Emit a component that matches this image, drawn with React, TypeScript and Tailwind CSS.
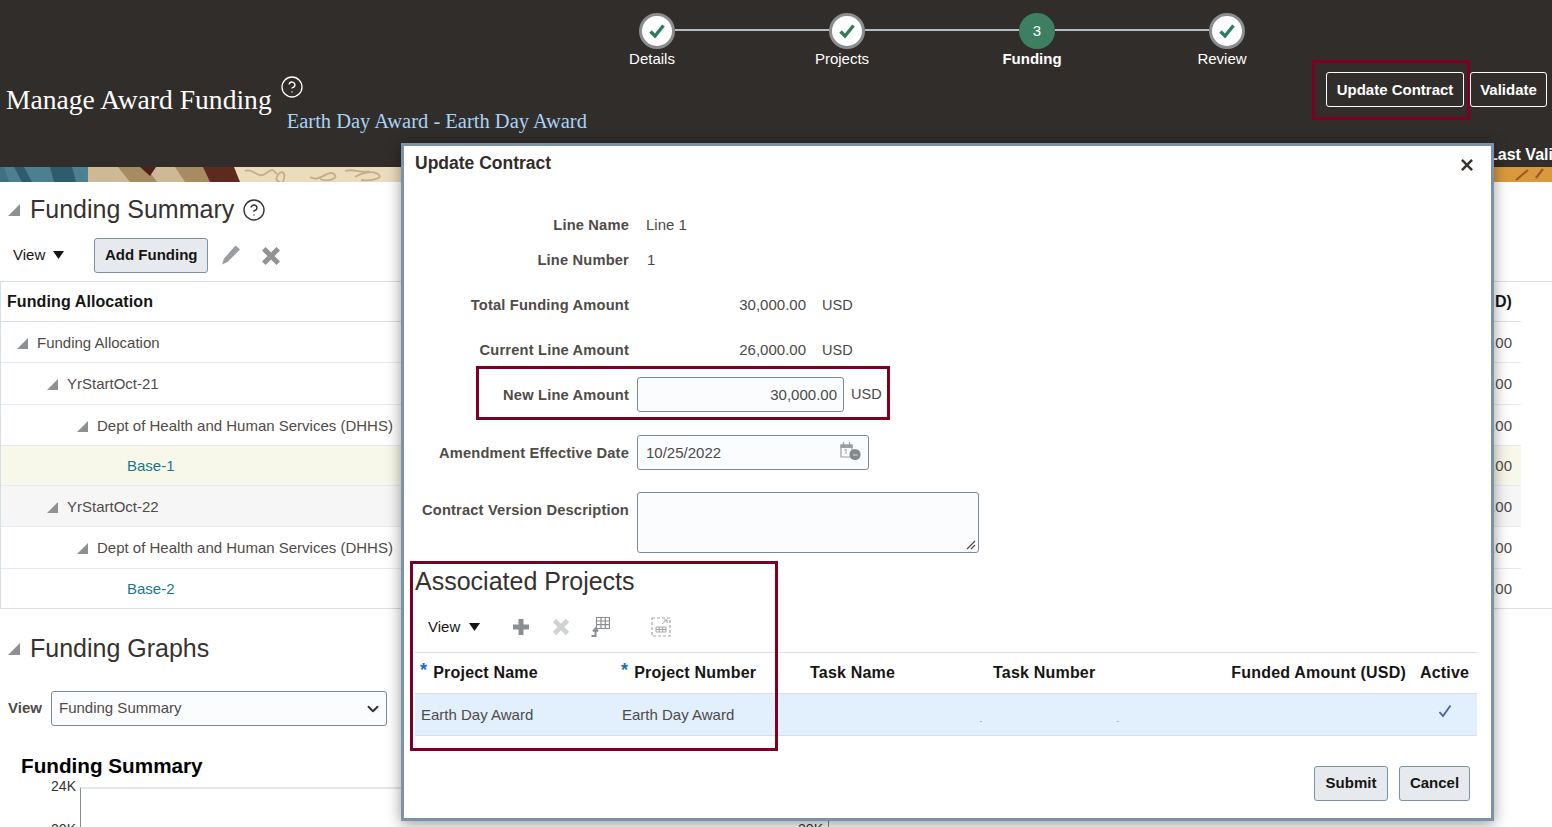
import React from 'react';
import { ChevronDown, CircleHelp } from 'lucide-react';

const steps = [
  { label: 'Details', done: true },
  { label: 'Projects', done: true },
  { label: 'Funding', done: false },
  { label: 'Review', done: true },
];

const rows = [
  { label: 'Funding Allocation', indent: 'pl-[16px]', cls: 'h-[41px]' },
  { label: 'YrStartOct-21', indent: 'pl-[46px]', cls: 'h-[42px]' },
  { label: 'Dept of Health and Human Services (DHHS)', indent: 'pl-[76px]', cls: 'h-[41px]' },
  { label: 'Base-1', indent: 'pl-[126px]', cls: 'h-[40px] bg-[#f7f8e9]', link: true },
  { label: 'YrStartOct-22', indent: 'pl-[46px]', cls: 'h-[41px] bg-[#f6f6f6]' },
  { label: 'Dept of Health and Human Services (DHHS)', indent: 'pl-[76px]', cls: 'h-[42px]' },
  { label: 'Base-2', indent: 'pl-[126px]', cls: 'h-[39px] border-b-0', link: true },
];

function Disclosure({ size = 11 }: { size?: number }) {
  return (
    <svg width={size} height={size} viewBox="0 0 11 11" className="shrink-0">
      <polygon points="11,0 11,11 0,11" fill="#8e9194" />
    </svg>
  );
}

function DownArrow() {
  return (
    <svg width="11" height="8" viewBox="0 0 11 8">
      <polygon points="0,0 11,0 5.5,8" fill="#161513" />
    </svg>
  );
}

function Cross({ size = 18, color = '#8f9396', width = 4.5 }: { size?: number; color?: string; width?: number }) {
  return (
    <svg width={size} height={size} viewBox="0 0 18 18">
      <path d="M2.5 2.5 15.5 15.5M15.5 2.5 2.5 15.5" stroke={color} strokeWidth={width} />
    </svg>
  );
}

function Check() {
  return (
    <svg width="18" height="16" viewBox="0 0 18 16">
      <path d="M2.5 8.5 7 13 15.5 2.5" fill="none" stroke="#2f7d5c" strokeWidth="3.4" />
    </svg>
  );
}

function Step({ done }: { done: boolean }) {
  if (!done) {
    return (
      <div className="w-[36px] h-[36px] rounded-full bg-[#3c8061] flex items-center justify-center text-[15px] text-white shrink-0">
        3
      </div>
    );
  }
  return (
    <div className="w-[36px] h-[36px] rounded-full bg-white border-[3px] border-[#8a8d8f] flex items-center justify-center shrink-0">
      <Check />
    </div>
  );
}

function Banner() {
  return (
    <svg width="1552" height="15" viewBox="0 0 1552 15" className="block">
      <rect width="1552" height="15" fill="#eadcbd" />
      <rect width="90" height="15" fill="#4c7f8f" />
      <polygon points="0,0 4,0 9,15 0,15" fill="#3e7081" />
      <polygon points="14,0 24,0 32,15 22,15" fill="#2f5c6c" />
      <polygon points="50,0 72,0 76,15 54,15" fill="#2f5c6c" />
      <polygon points="78,0 88,0 98,15 88,15" fill="#4c8294" />
      <rect x="88" width="120" height="15" fill="#cdb995" />
      <polygon points="118,0 146,0 157,15 130,15" fill="#a68c60" />
      <polygon points="140,0 156,0 150,9" fill="#4f2018" />
      <polygon points="175,0 205,0 212,15 185,15" fill="#a68c60" />
      <polygon points="203,0 234,0 240,15 210,15" fill="#5e2a1f" />
      <path
        d="M245 4c8-4 12 8 20 3s6-6 12 0M276 12c4-10 10-8 8 0s-6 2-8 0M310 10c10 6 18-8 24-3s-8 8-14 5M345 4c10-3 16 3 24 0M355 10c10-6 20-6 24-2s-10 6-18 5"
        fill="none"
        stroke="#c4ae89"
        strokeWidth="1.8"
      />
      <rect x="1494" width="58" height="15" fill="#d99a3e" />
      <path d="M1516 13 1528 3M1536 11 1543 2" stroke="#9a5a2a" strokeWidth="2.2" />
    </svg>
  );
}

function Pencil() {
  return (
    <svg width="22" height="22" viewBox="0 0 22 22">
      <path d="M15.5 1.5 20 5.5 7.5 18 2 20.5 4 14.5Z" fill="#9a9ea1" />
    </svg>
  );
}

function ExportIcon() {
  return (
    <svg width="20" height="22" viewBox="0 0 20 22">
      <path d="M6.5 1.5h13v11h-13zM6.5 5h13M6.5 8.7h13M11 1.5V12.5M15.3 1.5V12.5" fill="none" stroke="#8b8f92" strokeWidth="1.2" />
      <path d="M1.5 20h4v-6M3 15.5 5.5 12.5 8 15.5" fill="none" stroke="#8b8f92" strokeWidth="2" />
    </svg>
  );
}

function DetachIcon() {
  return (
    <svg width="20" height="20" viewBox="0 0 20 20">
      <rect x="1" y="1" width="18" height="18" fill="none" stroke="#a3a6a9" strokeWidth="1.2" strokeDasharray="3 2" />
      <path d="M5 10h10v5H5zM5 12.5h10M8.3 10v5M11.7 10v5" fill="none" stroke="#a3a6a9" strokeWidth="1" />
      <path d="M11 7 15.5 3M13 3h3v3" fill="none" stroke="#a3a6a9" strokeWidth="1" />
    </svg>
  );
}

function CalendarClock() {
  return (
    <svg width="22" height="20" viewBox="0 0 22 20">
      <path d="M1 4h11v12H1z" fill="none" stroke="#9a9ea1" strokeWidth="1.2" />
      <path d="M1 4h11v2.4H1zM3.5 1v3M9.5 1v3" fill="#9a9ea1" stroke="#9a9ea1" strokeWidth="1.2" />
      <path d="M4.5 9 6 8v5" fill="none" stroke="#9a9ea1" strokeWidth="1" />
      <circle cx="15" cy="13.5" r="5.6" fill="#85898c" />
      <path d="M13 14h4.5" stroke="#d4d6d8" strokeWidth="1.1" />
    </svg>
  );
}

function FormRow({ label, height, margin, children, top, nudge }: { label: string; height: string; margin: string; children: React.ReactNode; top?: boolean; nudge?: boolean }) {
  return (
    <div className={`flex ${height} ${margin} ${top ? 'items-start' : 'items-center'}`}>
      <label className={`w-[225px] text-right font-bold text-[14.67px] tracking-[0.18px] text-[#4f4b47] shrink-0 ${top ? 'pt-[7px]' : ''} ${nudge ? 'pt-[1px]' : ''}`}>{label}</label>
      <div className="ml-[8px] flex items-center text-[15px] text-[#4a4a4a]">{children}</div>
    </div>
  );
}

function Star() {
  return <span className="text-[#1a6fb5] text-[18px] font-bold leading-none mr-[6px] -mt-[6px]">*</span>;
}

export default function App() {
  return (
    <div className="relative w-[1552px] h-[827px] overflow-hidden bg-white [font-family:'Liberation_Sans',sans-serif] text-[#161513]">
      <header className="h-[167px] bg-[#312d2a] flex text-white">
        <div className="w-[557px] shrink-0 flex">
          <h1 className="pl-[6px] pt-[84px] text-[27.6px] leading-[32px] [font-family:'Liberation_Serif',serif] whitespace-nowrap">
            Manage Award Funding
          </h1>
          <div className="ml-[8px] pt-[75px]">
            <CircleHelp size={24} strokeWidth={1.3} />
            <div className="pl-[7px] mt-[10px] text-[20.5px] leading-[24px] text-[#a9d3f5] [font-family:'Liberation_Serif',serif] whitespace-nowrap">
              Earth Day Award - Earth Day Award
            </div>
          </div>
        </div>
        <div className="w-[760px] shrink-0 pt-[13px]">
          <div className="ml-[82px] flex items-center">
            {steps.map((s, i) => (
              <React.Fragment key={s.label}>
                <Step done={s.done} />
                {i < 3 && <div className="w-[154px] h-[2px] -mt-[2px] bg-[#b5bcc4]" />}
              </React.Fragment>
            ))}
          </div>
          <div className="grid grid-cols-4 mt-[1px]">
            {steps.map((s) => (
              <span key={s.label} className={`text-center text-[15px] leading-[18px] ${s.done ? '' : 'font-bold'}`}>
                {s.label}
              </span>
            ))}
          </div>
        </div>
        <div className="ml-[9px] flex-1 pt-[72px] min-w-0">
          <div className="flex gap-[6px]">
            <button className="w-[138px] h-[35px] pt-[1px] border border-white rounded-[3px] font-bold text-[15px]">Update Contract</button>
            <button className="w-[77px] h-[35px] pt-[1px] border border-white rounded-[3px] font-bold text-[15px]">Validate</button>
          </div>
          <div className="mt-[40px] ml-[162px] font-bold text-[16px] leading-[16px] whitespace-nowrap">Last Validated</div>
        </div>
      </header>
      <Banner />

      <section>
        <div className="h-[55px] flex items-center pl-[8px]">
          <Disclosure size={12} />
          <h2 className="ml-[10px] text-[25px] text-[#36322f]">Funding Summary</h2>
          <CircleHelp size={24} strokeWidth={1.4} className="ml-[8px] text-[#36322f]" />
        </div>
        <div className="h-[44px] flex items-center pb-[8px] pl-[13px]">
          <span className="text-[15px] pt-[1px]">View</span>
          <span className="ml-[8px]"><DownArrow /></span>
          <button className="ml-[30px] w-[114px] h-[35px] pt-[1px] rounded-[3px] border border-[#7a92a6] bg-[#e6eaee] font-bold text-[15px]">Add Funding</button>
          <span className="ml-[12px]"><Pencil /></span>
          <span className="ml-[19px] mt-[1px]"><Cross size={20} /></span>
        </div>
        <div className="border-t border-b border-l border-[#d6dfe6]">
          <div className="w-[1520px] h-[40px] border-b border-[#d6dfe6] flex items-center justify-between pl-[6px] pr-[9px] font-bold text-[16px] tracking-[0.1px]">
            <span>Funding Allocation</span>
            <span>D)</span>
          </div>
          {rows.map((r, i) => (
            <div key={i} className={`w-[1520px] pt-[2px] border-b border-[#e6ebef] flex items-center justify-between pr-[9px] text-[15px] ${r.indent} ${r.cls}`}>
              <span className="flex items-center">
                {!r.link && <span className="mr-[9px]"><Disclosure /></span>}
                <span className={r.link ? 'text-[#17788f]' : 'text-[#4f4b47]'}>{r.label}</span>
              </span>
              <span className="text-[#4f4b47]">.00</span>
            </div>
          ))}
        </div>

        <div className="h-[78px] pt-[2px] flex items-center pl-[8px]">
          <Disclosure size={12} />
          <h2 className="ml-[10px] text-[25px] text-[#36322f]">Funding Graphs</h2>
        </div>
        <div className="h-[35px] flex items-center pl-[8px] mt-[4px]">
          <span className="w-[43px] font-bold text-[15px] text-[#4f4b47]">View</span>
          <div className="w-[336px] h-[35px] rounded-[3px] border border-[#7a8a96] bg-[#fbfcfe] flex items-center justify-between pl-[7px] pr-[4px] text-[15px] text-[#4f4b47]">
            Funding Summary
            <ChevronDown size={18} strokeWidth={2.6} className="text-[#36322f]" />
          </div>
        </div>
        <div className="mt-[27px] pl-[21px] font-bold text-[20.7px] leading-[26px] text-black">Funding Summary</div>
        <div className="flex mt-[8px]">
          <div className="w-[80px] shrink-0 text-right pr-[4px] text-[14px] leading-[16px] -mt-[9px] text-[#36322f]">
            <div>24K</div>
            <div className="mt-[27px]">20K</div>
          </div>
          <div className="w-[749px] h-[40px] border-l border-r border-t-2 border-l-[#8a8d8f] border-r-[#8a8d8f] border-t-[#e3e8ec] text-right pr-[5px] pt-[32px] text-[14px] leading-[16px] text-[#36322f]">
            20K
          </div>
        </div>
      </section>

      {/* Update Contract dialog */}
      <div className="absolute left-[401px] top-[143px] w-[1093px] h-[678px] bg-white border-[3px] border-[#7a93a8] shadow-[0_3px_14px_rgba(0,0,0,0.4)]">
        <div className="h-[38px] flex items-center justify-between pl-[11px] pr-[17px]">
          <span className="font-bold text-[17.5px] text-[#312d2a] -mt-[3px]">Update Contract</span>
          <Cross size={14} color="#36322f" width={3.2} />
        </div>
        <div className="pt-[29px]">
          <FormRow label="Line Name" height="h-[24px]" margin="">
            <span className="pl-[9px]">Line 1</span>
          </FormRow>
          <FormRow label="Line Number" height="h-[24px]" margin="mt-[11px]">
            <span className="pl-[10px]">1</span>
          </FormRow>
          <FormRow label="Total Funding Amount" height="h-[24px]" margin="mt-[21px]">
            <span className="w-[169px] text-right">30,000.00</span>
            <span className="ml-[16px] pt-[1px] text-[14.5px]">USD</span>
          </FormRow>
          <FormRow label="Current Line Amount" height="h-[24px]" margin="mt-[21px]">
            <span className="w-[169px] text-right">26,000.00</span>
            <span className="ml-[16px] pt-[1px] text-[14.5px]">USD</span>
          </FormRow>
          <FormRow label="New Line Amount" height="h-[35px]" margin="mt-[15px]" nudge>
            <div className="w-[207px] h-[35px] pt-[2px] rounded-[3px] border border-[#7a8a96] bg-[#fbfcfe] flex items-center justify-end pr-[6px]">30,000.00</div>
            <span className="ml-[7px] pt-[1px] text-[14.5px]">USD</span>
          </FormRow>
          <FormRow label="Amendment Effective Date" height="h-[35px]" margin="mt-[23px]" nudge>
            <div className="w-[232px] h-[35px] rounded-[3px] border border-[#7a8a96] bg-[#fbfcfe] flex items-center justify-between pl-[8px] pr-[6px]">
              <span className="pt-[1px]">10/25/2022</span>
              <span className="-mt-[3px]"><CalendarClock /></span>
            </div>
          </FormRow>
          <FormRow label="Contract Version Description" height="h-[61px]" margin="mt-[22px]" top>
            <div className="relative w-[342px] h-[61px] rounded-[3px] border border-[#7a8a96] bg-[#fbfcfe]">
              <svg width="10" height="10" viewBox="0 0 10 10" className="absolute right-[2px] bottom-[2px]">
                <path d="M1 9 9 1M5 9 9 5" stroke="#4f4b47" strokeWidth="1.2" />
              </svg>
            </div>
          </FormRow>
        </div>
        <h2 className="mt-[12px] ml-[11px] h-[32px] leading-[32px] text-[25px] text-[#36322f]">Associated Projects</h2>
        <div className="mt-[14px] h-[32px] flex items-center pl-[24px]">
          <span className="text-[15px]">View</span>
          <span className="ml-[9px]"><DownArrow /></span>
          <svg width="18" height="18" viewBox="0 0 18 18" className="ml-[32px]">
            <path d="M9 1v16M1 9h16" stroke="#8b8f92" strokeWidth="5" />
          </svg>
          <span className="ml-[22px]"><Cross size={18} color="#d0d3d5" width={4.6} /></span>
          <span className="ml-[20px]"><ExportIcon /></span>
          <span className="ml-[41px]"><DetachIcon /></span>
        </div>
        <div className="mt-[9px] ml-[11px] w-[1062px] text-[15px]">
          <div className="grid grid-cols-[201px_187px_184px_137px_288px_65px] h-[42px] border-t border-b border-[#d6dfe6] items-center font-bold text-[16px] text-[#161513] tracking-[0.2px]">
            <span className="pl-[5px] flex items-center"><Star />Project Name</span>
            <span className="pl-[5px] flex items-center"><Star />Project Number</span>
            <span className="pl-[7px]">Task Name</span>
            <span className="pl-[6px]">Task Number</span>
            <span className="text-right pr-[6px]">Funded Amount (USD)</span>
            <span className="text-center">Active</span>
          </div>
          <div className="grid grid-cols-[201px_187px_184px_137px_288px_65px] h-[42px] pt-[2px] border-b border-[#d6dfe6] bg-[#e2effc] items-center text-[#4f4b47]">
            <span className="pl-[6px]">Earth Day Award</span>
            <span className="pl-[6px]">Earth Day Award</span>
            <span className="text-right pr-[5px] text-[8px] pt-[8px]">.</span>
            <span className="text-right pr-[5px] text-[8px] pt-[8px]">.</span>
            <span />
            <span className="flex justify-center -mt-[10px]">
              <svg width="14" height="14" viewBox="0 0 14 14">
                <path d="M1.5 8 5 12 12.5 1.5" fill="none" stroke="#4a5c9a" strokeWidth="1.8" />
              </svg>
            </span>
          </div>
        </div>
        <div className="mt-[30px] flex justify-end gap-[11px] pr-[21px]">
          <button className="w-[74px] h-[35px] rounded-[3px] border border-[#7a92a6] bg-[#e6eaee] font-bold text-[15px]">Submit</button>
          <button className="w-[71px] h-[35px] rounded-[3px] border border-[#7a92a6] bg-[#e6eaee] font-bold text-[15px]">Cancel</button>
        </div>
      </div>

      {/* red callouts drawn over the screenshot */}
      <div className="absolute left-[1312px] top-[60px] w-[158px] h-[60px] border-[3px] border-[#7d0022]" />
      <div className="absolute left-[476px] top-[366px] w-[414px] h-[54px] border-[3px] border-[#7d0022]" />
      <div className="absolute left-[410px] top-[561px] w-[368px] h-[190px] border-[3px] border-[#7d0022]" />
    </div>
  );
}
